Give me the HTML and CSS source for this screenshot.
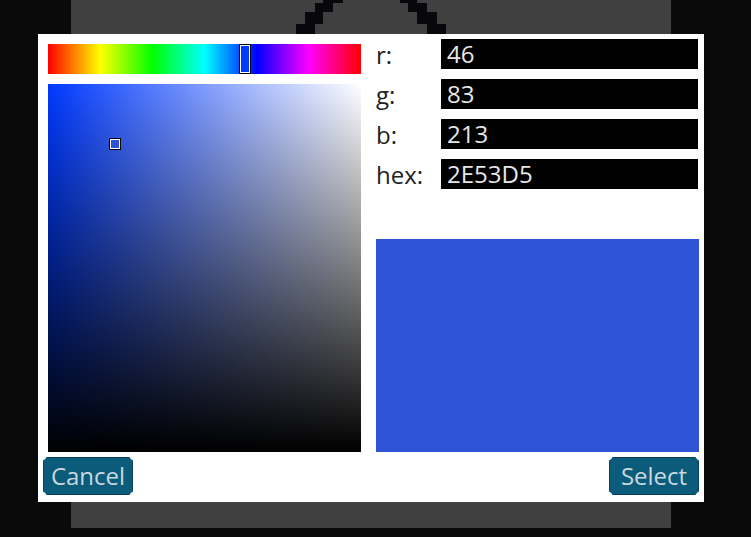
FILE: index.html
```html
<!DOCTYPE html>
<html>
<head>
    <title>Color Picker</title>
    <link rel="stylesheet" href="styles.css">
</head>

<body>
    <div class="window">
        <svg class="arc" width="180" height="34" viewBox="0 0 180 34">
            <path fill="#08080c" d="M52 0h20v3H52zM44 3h18v9H44zM34 12h18v12H34zM25 24h19v10H25z"/>
            <path fill="#08080c" d="M129 0h17v3h-17zM137 3h19v9h-19zM146 12h20v12h-20zM156 24h19v10h-19z"/>
        </svg>
    </div>

    <div class="dialog">
        <div class="picker">
            <div class="left">
                <div class="hue-bar">
                    <div class="hue-thumb"></div>
                </div>
                <div class="sv-box">
                    <div class="sv-cursor"></div>
                </div>
            </div>

            <div class="right">
                <div class="fields">
                    <div class="field"><label>r:</label><div class="value">46</div></div>
                    <div class="field"><label>g:</label><div class="value">83</div></div>
                    <div class="field"><label>b:</label><div class="value">213</div></div>
                    <div class="field"><label>hex:</label><div class="value">2E53D5</div></div>
                </div>
                <div class="preview"></div>
            </div>
        </div>

        <div class="buttons">
            <button class="btn">Cancel</button>
            <button class="btn">Select</button>
        </div>
    </div>
</body>
</html>
```

FILE: styles.css
```css
body { margin: 0; padding: 0; background-color: #0a0a0a; font-family: 'Open Sans', 'Noto Sans', sans-serif; }

/* window behind the dialog */
.window { margin-left: 71px; width: 600px; height: 528px; background-color: #404040; }
.arc { display: block; margin-left: 200px; }

/* Dialog */
.dialog {
    position: absolute;
    left: 38px;
    top: 34px;
    width: 666px;
    height: 468px;
    box-sizing: border-box;
    padding: 5px 5px 0 5px;
    background: #fff;
}
.picker { display: flex; gap: 15px; }
.left { width: 313px; padding: 5px 0 0 5px; display: flex; flex-direction: column; gap: 10px; }

.hue-bar {
    position: relative;
    height: 30px;
    background: linear-gradient(to right, #f00, #ff0, #0f0, #0ff, #00f, #f0f, #f00);
}
.hue-thumb {
    position: absolute;
    left: 191px;
    top: 0;
    width: 12px;
    height: 30px;
    box-sizing: border-box;
    border: 1px solid #000;
    box-shadow: inset 0 0 0 1px #fff;
    background: #0039ff;
}

.sv-box {
    position: relative;
    height: 368px;
    background:
        linear-gradient(to top, #000, rgba(0,0,0,0)),
        linear-gradient(to left, #fff, rgba(255,255,255,0)),
        #0039ff;
}
.sv-cursor {
    position: absolute;
    left: 61px;
    top: 54px;
    width: 12px;
    height: 12px;
    box-sizing: border-box;
    border: 1px solid #000;
    box-shadow: inset 0 0 0 1px #fff;
    background: #2e53d5;
}

.right { width: 323px; }
.fields { display: flex; flex-direction: column; gap: 10px; }
.field { display: flex; align-items: center; height: 30px; }
.field label { width: 65px; font-size: 24px; color: #222; }
.value {
    flex: 1;
    margin-right: 1px;
    height: 30px;
    line-height: 30px;
    padding-left: 6px;
    background: #000;
    color: #e6e6e6;
    font-size: 24px;
}
.preview { margin-top: 50px; height: 213px; background: #2e53d5; }

/* Buttons */
.buttons { display: flex; justify-content: space-between; padding-top: 5px; }
.btn {
    width: 90px;
    height: 38px;
    padding: 0;
    border: 1px solid #063f57;
    background: #0b5b7b;
    color: #c9d7de;
    font-family: 'Open Sans', 'Noto Sans', sans-serif;
    font-size: 24px;
    line-height: 36px;
    clip-path: polygon(4px 0, calc(100% - 4px) 0, 100% 4px, 100% calc(100% - 4px), calc(100% - 4px) 100%, 4px 100%, 0 calc(100% - 4px), 0 4px);
}
```
